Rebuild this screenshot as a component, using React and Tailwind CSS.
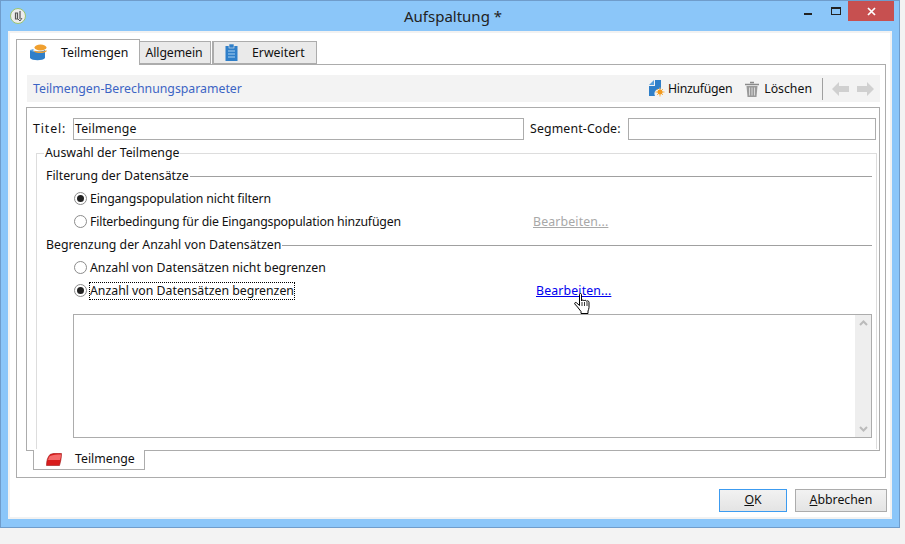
const FONT = "font-['Noto_Sans',sans-serif]";

function DbIcon() {
  return (
    <svg width="17" height="17" viewBox="0 0 17 17">
      <path d="M0 6c3 2 12 2 15 0v8c-2 3-13 3-15 0z" fill="#2f7fc9" />
      <ellipse cx="10.500" cy="3.500" rx="6" ry="3" fill="#f0a030" />
      <path d="M4.500 6.500c3 1.500 9 1.500 12-.5v1.500c-3 2-9 2-12 .5z" fill="#f0a030" />
      <path d="M0 6c1 1 2 1.500 3.500 1.700V5z" fill="#5ba3de" />
    </svg>
  );
}

function ClipboardIcon() {
  return (
    <svg width="13" height="17" viewBox="0 0 13 17">
      <rect x="0.500" y="2" width="12" height="15" fill="#2f7fc9" />
      <rect x="4" y="0" width="5" height="4" fill="#2f7fc9" stroke="#e8e8e8" strokeWidth="0.600" />
      <path d="M3 7h7M3 10h7M3 13h7" stroke="#a9d2f2" strokeWidth="1.200" />
    </svg>
  );
}

function AddIcon() {
  return (
    <svg width="16" height="17" viewBox="0 0 16 17">
      <path d="M0 5l5-5v5z" fill="#5aa0dc" />
      <path d="M6 0h6v9a5 5 0 0 0-6 7H0V6h6z" fill="#2f7fc9" />
      <path d="M11 7.500v9M6.500 12h9M8 9l6 6M14 9l-6 6" stroke="#f7b44e" strokeWidth="1" />
      <circle cx="11" cy="12" r="2.500" fill="#f39a1e" />
    </svg>
  );
}

function TrashIcon() {
  return (
    <svg width="14" height="16" viewBox="0 0 14 16">
      <path d="M5 1.500h4M0 3.500h14" stroke="#8a8a8a" strokeWidth="1.600" />
      <path d="M1.500 5h11l-1 11h-9z" fill="#9a9a9a" />
      <path d="M4.500 6.500v8M7 6.500v8M9.500 6.500v8" stroke="#d8d8d8" strokeWidth="1" />
    </svg>
  );
}

function ArrowIcon({ flip }) {
  return (
    <svg width="17" height="14" viewBox="0 0 17 14" className={flip ? "-scale-x-100" : ""}>
      <path d="M0 7l7-7v4h10v6H7v4z" fill="#d0d0d0" />
    </svg>
  );
}

function SegmentIcon() {
  return (
    <svg width="16" height="13" viewBox="0 0 16 13">
      <path d="M4 1.500C7 0 12 0 15.500 .5 15.500 5 14.500 9 13.500 12.500H.500C.500 8 1.500 4 4 1.500z" fill="#d81c1c" stroke="#a01515" strokeWidth="0.600" />
      <path d="M4 3C7 1.500 11 1.500 15 1.500 15 3.500 14.500 5.500 14 7H2C2.500 5.500 3 4 4 3z" fill="#f56a6a" />
    </svg>
  );
}

function AppIcon() {
  return (
    <svg width="16" height="16" viewBox="0 0 16 16">
      <circle cx="8" cy="8" r="7.500" fill="#ececec" stroke="#9cc56e" strokeWidth="1" />
      <path d="M5.500 5v6h2V5zM10 3v8" stroke="#555555" strokeWidth="1.200" fill="none" />
      <path d="M8 11l2 2 2-3" stroke="#555555" strokeWidth="1" fill="none" />
    </svg>
  );
}

function HandCursor() {
  return (
    <svg width="17" height="22" viewBox="0 0 17 22" className="absolute left-[574px] top-[293px]">
      <path
        d="M5.500 1.500c0-1.300 2-1.300 2 0V8c.3-1.300 2.200-1.300 2.500 0 .3-1 2.200-1 2.500.3.300-.8 2.500-.6 2.500 1v5.200c0 1.500-.7 2.500-1 3.500v2.500H7v-2L3.500 14 .8 11c-.6-1.200.7-2 1.700-1.200l3 2.700z"
        fill="#ffffff"
        stroke="#000000"
        strokeWidth="1"
        strokeLinejoin="round"
      />
      <path d="M8 9v4M10.500 9v4M13 9v4" stroke="#000000" strokeWidth="0.800" />
    </svg>
  );
}

function Radio({ checked, label, focus, className = "" }) {
  return (
    <div className="flex items-center h-[23px] pl-[37px]">
      <span className="w-[13px] h-[13px] rounded-full border border-[#8c8c8c] bg-white flex items-center justify-center shrink-0 mr-[3px]">
        {checked && <span className="w-[7px] h-[7px] rounded-full bg-[#222222]" />}
      </span>
      <span className={"leading-[16px] " + className + (focus ? " outline outline-1 outline-dotted outline-black" : "")}>{label}</span>
    </div>
  );
}

function SectionHead({ children }) {
  return (
    <div className="flex items-center h-[18px] pl-[9px] pr-[4px]">
      <span>{children}</span>
      <span className="flex-1 h-px bg-[#a0a0a0] ml-px" />
    </div>
  );
}

export default function App() {
  return (
    <div className={"w-[905px] h-[544px] bg-[#f3f3f3] text-[12.300px] text-[#111111] " + FONT}>
      <div className="w-[900px] h-[528px] bg-[#8bc6f9] border border-[#6f9ccb] flex flex-col">
        {/* title bar */}
        <div className="relative h-[30px] shrink-0 flex items-center justify-center text-[15px] text-[#222222]">
          <span className="absolute left-[9px] top-[7px]"><AppIcon /></span>
          <span className="pl-[6px]">Aufspaltung *</span>
          <div className="absolute right-[5px] top-0 flex">
            <div className="w-[30px] h-[20px] flex items-center justify-center">
              <span className="w-[8px] h-[2px] bg-[#222222] mt-[6px]" />
            </div>
            <div className="w-[25px] h-[20px] flex items-center justify-center">
              <span className="w-[10px] h-[8px] border border-t-2 border-[#222222]" />
            </div>
            <div className="w-[46px] h-[20px] bg-[#c75050] flex items-center justify-center">
              <svg width="9" height="9" viewBox="0 0 9 9">
                <path d="M1 1l7 7M8 1L1 8" stroke="#ffffff" strokeWidth="1.700" />
              </svg>
            </div>
          </div>
        </div>

        {/* client area */}
        <div className="mx-[7px] h-[488px] bg-white border-[2px] border-[#f2f2f2] px-[6px] pt-[6px] flex flex-col">
          {/* tabs */}
          <div className="flex items-end h-[25px] pl-0">
            <div className="relative z-10 w-[124px] h-[26px] -mb-px bg-white border border-b-0 border-[#acacac] flex items-center pl-[13px]">
              <DbIcon />
              <span className="ml-[14px] mt-[2px]">Teilmengen</span>
            </div>
            <div className="w-[71px] h-[23px] bg-[#eaeaea] border border-l-0 border-[#acacac] flex items-center justify-center pr-[2px] pt-[2px] tracking-[-0.100px]">
              Allgemein
            </div>
            <div className="w-[105px] h-[23px] ml-px bg-[#eaeaea] border border-l-[2px] border-[#acacac] flex items-center pl-[11px]">
              <ClipboardIcon />
              <span className="ml-[14px] mt-[2px]">Erweitert</span>
            </div>
          </div>

          {/* tab panel */}
          <div className="w-[870px] h-[414px] border border-[#acacac] bg-white pt-[10px] px-[9px] flex flex-col">
            <div className="h-[27px] bg-[#f3f3f3] flex items-center pl-[6px] pr-[6px] ml-px shrink-0 w-[853px]">
              <span className="text-[#3c64c4] mt-[2px]">Teilmengen-Berechnungsparameter</span>
              <div className="ml-auto flex items-center">
                <AddIcon />
                <span className="ml-[3px] mt-[2px] tracking-[-0.300px]">Hinzufügen</span>
                <span className="ml-[13px]"><TrashIcon /></span>
                <span className="ml-[5px] mt-[2px]">Löschen</span>
                <span className="w-px h-[22px] bg-[#a0a0a0] ml-[10px] mr-[9px]" />
                <ArrowIcon />
                <span className="ml-[8px]"><ArrowIcon flip /></span>
              </div>
            </div>

            {/* inner box */}
            <div className="mt-[5px] w-[854px] h-[344px] border border-[#acacac] bg-white relative shrink-0 pt-[10px] pr-[2px]">
              <div className="flex items-center h-[22px] pl-[6px]">
                <span className="w-[40px] tracking-[0.900px]">Titel:</span>
                <div className="w-[451px] h-[22px] border border-[#acacac] pl-[1px] flex items-center tracking-[0.200px]">Teilmenge</div>
                <span className="ml-[6px] w-[98px] tracking-[0.150px]">Segment-Code:</span>
                <div className="w-[248px] h-[22px] border border-[#acacac]" />
              </div>

              {/* group box */}
              <div className="mt-[13px] ml-[9px] h-[296px] border-l border-r border-[#dddddd] relative">
                <div className="absolute top-0 left-0 right-0 h-px bg-[#dddddd]" />
                <div className="relative -top-[8px] bg-white w-fit ml-[7px] px-px h-[16px] leading-[16px]">Auswahl der Teilmenge</div>
                <div className="-mt-[2px]">
                  <SectionHead>Filterung der Datensätze</SectionHead>
                  <div className="mt-[2px]">
                    <Radio checked label="Eingangspopulation nicht filtern" className="tracking-[-0.150px]" />
                  </div>
                  <div className="relative">
                    <Radio label="Filterbedingung für die Eingangspopulation hinzufügen" className="tracking-[-0.200px]" />
                    <span className="absolute left-[496px] top-[3px] text-[#a8a8a8] underline tracking-[0.150px]">Bearbeiten...</span>
                  </div>
                  <div className="mt-[3px]">
                    <SectionHead>Begrenzung der Anzahl von Datensätzen</SectionHead>
                  </div>
                  <div className="mt-[2px]">
                    <Radio label="Anzahl von Datensätzen nicht begrenzen" />
                  </div>
                  <div className="relative">
                    <Radio checked focus label="Anzahl von Datensätzen begrenzen" />
                    <span className="absolute left-[499px] top-[3px] text-[#0000ee] underline tracking-[0.150px]">Bearbeiten...</span>
                  </div>
                  <div className="mt-[12px] ml-[36px] mr-[4px] h-[124px] border border-[#acacac] flex justify-end">
                    <div className="w-[16px] bg-[#eeeeee] flex flex-col items-center justify-between py-[5px]">
                      <svg width="9" height="6" viewBox="0 0 9 6"><path d="M1 5l3.500-3.500L8 5" stroke="#bbbbbb" strokeWidth="2" fill="none" /></svg>
                      <svg width="9" height="6" viewBox="0 0 9 6"><path d="M1 1l3.500 3.500L8 1" stroke="#bbbbbb" strokeWidth="2" fill="none" /></svg>
                    </div>
                  </div>
                </div>
              </div>
            </div>

            {/* lower tab */}
            <div className="relative z-10 -mt-px ml-[7px] w-[112px] h-[20px] bg-white border border-t-0 border-[#acacac] flex items-center pl-[12px] shrink-0">
              <SegmentIcon />
              <span className="ml-[13px]">Teilmenge</span>
            </div>
          </div>

          {/* buttons */}
          <div className="flex justify-end mt-[11px] -mr-[3px]">
            <div className="w-[68px] h-[23px] border border-[#3c9bf0] bg-gradient-to-b from-[#f2f2f2] to-[#e4e4e4] flex items-center justify-center">
              <span><span className="underline">O</span>K</span>
            </div>
            <div className="w-[92px] h-[23px] ml-[8px] border border-[#acacac] bg-gradient-to-b from-[#f2f2f2] to-[#e4e4e4] flex items-center justify-center">
              <span><span className="underline">A</span>bbrechen</span>
            </div>
          </div>
        </div>
      </div>
      <HandCursor />
    </div>
  );
}
